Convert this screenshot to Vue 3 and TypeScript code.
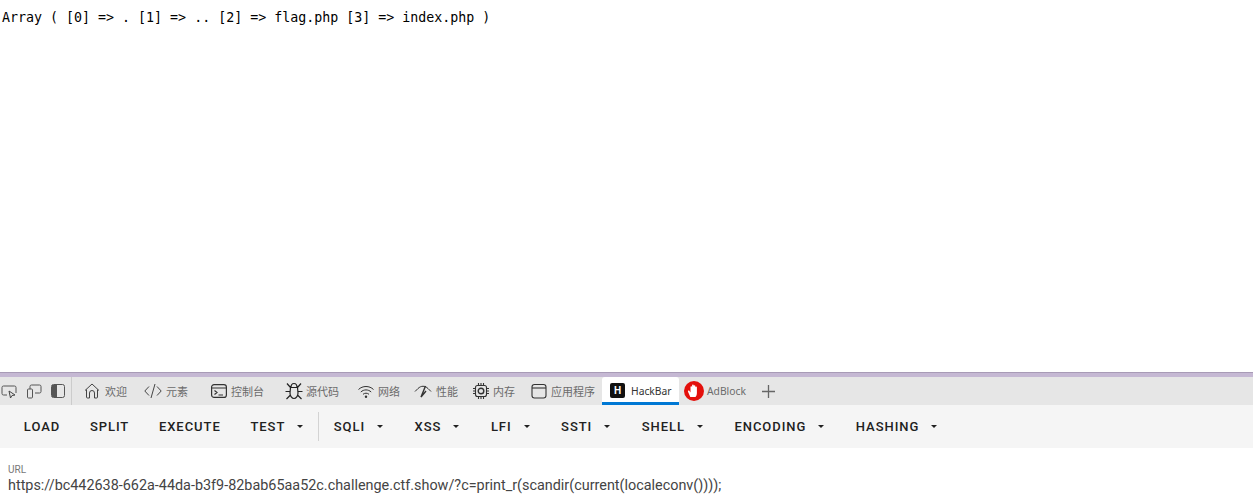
<script setup lang="ts">
interface Btn { label: string; caret?: boolean; divider?: boolean }
const buttons: Btn[] = [
  { label: 'LOAD' }, { label: 'SPLIT' }, { label: 'EXECUTE' }, { label: 'TEST', caret: true, divider: true },
  { label: 'SQLI', caret: true }, { label: 'XSS', caret: true }, { label: 'LFI', caret: true },
  { label: 'SSTI', caret: true }, { label: 'SHELL', caret: true }, { label: 'ENCODING', caret: true }, { label: 'HASHING', caret: true },
]
</script>

<template>
  <div class="page">
    <main class="output">Array ( [0] =&gt; . [1] =&gt; .. [2] =&gt; flag.php [3] =&gt; index.php )</main>
    <section class="devtools">
      <div class="resizer"></div>
      <nav class="tabbar">
        <div class="tools">
          <svg class="tool" viewBox="0 0 16 16" fill="none" stroke="#555" stroke-width="1"><path d="M6 12H2.500A1.500 1.500 0 0 1 1 10.500V4.500A1.500 1.500 0 0 1 2.500 3h11A1.500 1.500 0 0 1 15 4.500V10"/><path d="M8 8l1.500 7 1.500-2.500 3-.5z" stroke="#444"/></svg>
          <svg class="tool" viewBox="0 0 16 16" fill="none" stroke="#555" stroke-width="1"><rect x="1.500" y="6" width="5" height="9" rx="1"/><path d="M4 6V3.500A1.500 1.500 0 0 1 5.500 2h8A1.500 1.500 0 0 1 15 3.500v5a1.500 1.500 0 0 1-1.500 1.500H9"/></svg>
          <svg class="tool dock" viewBox="0 0 14 16"><rect x=".5" y="1.500" width="13" height="13" rx="2" fill="none" stroke="#555"/><rect x="1" y="2" width="5" height="12" fill="#555"/></svg>
        </div>
        <div class="tab home"><svg class="ico" viewBox="0 0 16 16" fill="none" stroke="#444"><path d="M1 7.500 8 1l7 6.500M2.500 6.500V14a1 1 0 0 0 1 1h2V10a2.500 2.500 0 0 1 5 0v5h2a1 1 0 0 0 1-1V6.500"/></svg><span>欢迎</span></div>
        <div class="tab code"><svg class="ico wide" viewBox="0 0 18 16" fill="none" stroke="#444"><path d="M5 3.500.8 8 5 12.500M13 3.500 17.200 8 13 12.500M11 1 7 15"/></svg><span>元素</span></div>
        <div class="tab console"><svg class="ico" viewBox="0 0 16 16" fill="none" stroke="#333" stroke-width="1.200"><rect x=".6" y="1.600" width="14.800" height="12.800" rx="2.500"/><path d="M.6 5h14.800M3.500 7.500 6 9.500l-2.500 2M7.500 12H12"/></svg><span>控制台</span></div>
        <div class="tab bug"><svg class="ico wide tall" viewBox="0 0 18 18" fill="none" stroke="#222" stroke-width="1.200"><path d="M6 5.500C6 2.800 7.500 1.500 9 1.500s3 1.300 3 4M5.500 5.500h7L13 11c0 3-2 5.500-4 5.500S5 14 5 11zM5.500 5.500 2 1.500M12.500 5.500 16 1.500M5 9.500H.5M13 9.500h4.500M5.500 13 1.500 17M12.500 13l4 4"/></svg><span>源代码</span></div>
        <div class="tab wifi"><svg class="ico" viewBox="0 0 16 16" fill="none" stroke="#333"><path d="M.5 6.500C4.500 2.500 11.500 2.500 15.500 6.500M2.800 9C5.800 6.200 10.200 6.200 13.200 9M5 11.300c1.800-1.500 4.200-1.500 6 0"/><circle cx="8" cy="13.800" r="1.200" fill="#333" stroke="none"/></svg><span>网络</span></div>
        <div class="tab perf"><svg class="ico wide" viewBox="0 0 18 16" fill="none" stroke="#333"><path d="M1 8.500 4 5.500C7 2.500 11 2.500 14 5.500L17 8.500"/><path d="M11.500 3 7 14l5-6" stroke-width="1.400"/></svg><span>性能</span></div>
        <div class="tab mem"><svg class="ico" viewBox="0 0 16 16" fill="none" stroke="#333" stroke-width="1.100"><rect x="2.500" y="2.500" width="11" height="11" rx="2"/><circle cx="8" cy="8" r="2.800" stroke-width="1.400"/><path d="M0 5.500h2.500M0 8h2.500M0 10.500h2.500M13.500 5.500H16M13.500 8H16M13.500 10.500H16M5.500 0v2.500M8 0v2.500M10.500 0v2.500M5.500 13.500V16M8 13.500V16M10.500 13.500V16"/></svg><span>内存</span></div>
        <div class="tab app"><svg class="ico" viewBox="0 0 16 16" fill="none" stroke="#333" stroke-width="1.100"><rect x="1" y="1.500" width="14" height="13.500" rx="2.500"/><path d="M1 5h14"/></svg><span>应用程序</span></div>
        <div class="tab hackbar"><span class="hb-icon">H</span><span>HackBar</span></div>
        <div class="tab adblock">
          <svg class="ab-icon" viewBox="0 0 20 20"><circle cx="10" cy="10" r="10" fill="#e4100c"/><path d="M6.300 16 4 10.800c-.4-1 .9-1.700 1.500-.8l1 1.400V6a.8.800 0 0 1 1.600 0V4.200a.8.800 0 0 1 1.600 0V5a.8.800 0 0 1 1.600 0v1.400a.8.800 0 0 1 1.600 0V12c0 2-.7 3-1.400 4z" fill="#fff"/></svg>
          <span>AdBlock</span>
        </div>
        <svg class="plus" viewBox="0 0 13 13" stroke="#666" stroke-width="1.300"><path d="M6.500 0v13M0 6.500h13"/></svg>
      </nav>
      <div class="toolbar">
        <template v-for="b in buttons" :key="b.label">
          <button class="btn"><span>{{ b.label }}</span><i v-if="b.caret" class="caret"></i></button>
          <div v-if="b.divider" class="divider"></div>
        </template>
      </div>
      <div class="field">
        <label class="field-label">URL</label>
        <div class="field-value">https://bc442638-662a-44da-b3f9-82bab65aa52c.challenge.ctf.show/?c=print_r(scandir(current(localeconv())));</div>
      </div>
    </section>
  </div>
</template>

<style>
html, body { margin: 0; background: #fff; overflow: hidden; }
</style>

<style scoped>
.page { width: 1253px; height: 502px; display: flex; flex-direction: column; overflow: hidden; }
.output { height: 372px; box-sizing: border-box; padding-top: 10px; padding-left: 2px; font: 13.3px/16px "DejaVu Sans Mono", monospace; color: #000; white-space: pre; }
.devtools { flex: 1; display: flex; flex-direction: column; }
.resizer { height: 5px; background: #c5b8d3; box-shadow: inset 0 1px 0 #a89bb6; }
.tabbar { height: 28px; background: #e6e6e6; display: flex; align-items: center; font: 11px "Noto Sans CJK SC", "Noto Sans", sans-serif; color: #6b6b6b; }
.tools { display: flex; align-items: center; height: 28px; border-right: 1px solid #ccc; flex: none; padding-left: 1px; width: 70px; }
.tool { width: 16px; height: 16px; margin-right: 9px; flex: none; }
.dock { width: 14px; }
.tab { display: flex; align-items: center; height: 28px; flex: none; gap: 5px; box-sizing: border-box; }
.ico { width: 16px; height: 16px; flex: none; }
.ico.wide { width: 18px; }
.ico.tall { height: 18px; }
.home { margin-left: 12px; }
.code { margin-left: 17px; gap: 4px; }
.console { margin-left: 23px; gap: 4px; }
.bug { margin-left: 21px; gap: 3px; }
.wifi { margin-left: 19px; gap: 4px; }
.perf { margin-left: 14px; gap: 4px; }
.mem { margin-left: 15px; gap: 4px; }
.app { margin-left: 16px; gap: 4px; }
.hackbar { margin-left: 7px; width: 77px; padding-left: 8px; gap: 6px; background: #fff; color: #333; border-bottom: 3px solid #0078d4; border-radius: 3px 3px 0 0; font-family: "Noto Sans", sans-serif; font-size: 10.3px; padding-top: 2px; }
.hb-icon { width: 15px; height: 15px; background: #111; color: #fff; border-radius: 2px; font: 700 10px/15px "Liberation Sans", sans-serif; text-align: center; }
.adblock { margin-left: 5px; gap: 3px; font-family: "Noto Sans", sans-serif; font-size: 10.3px; }
.ab-icon { width: 20px; height: 20px; flex: none; }
.plus { width: 13px; height: 13px; margin-left: 16px; flex: none; }
.toolbar { height: 43px; background: #f5f5f5; display: flex; align-items: center; padding-left: 9px; box-sizing: border-box; }
.btn { appearance: none; border: 0; background: none; height: 36px; padding: 0 14.85px; display: flex; align-items: center; font: 500 13px "Roboto", sans-serif; letter-spacing: .95px; color: #212121; flex: none; }
.caret { width: 0; height: 0; border-left: 3px solid transparent; border-right: 3px solid transparent; border-top: 3px solid #212121; margin-left: 12px; margin-right: 1.8px; }
.divider { width: 1px; height: 29px; background: #d3d3d3; flex: none; margin-left: -2px; }
.field { padding: 16px 8px 0; font-family: "Roboto", sans-serif; }
.field-label { display: block; font-size: 10px; line-height: 12px; color: #777; }
.field-value { font-size: 14.4px; line-height: 19px; color: #444; white-space: nowrap; }
</style>
